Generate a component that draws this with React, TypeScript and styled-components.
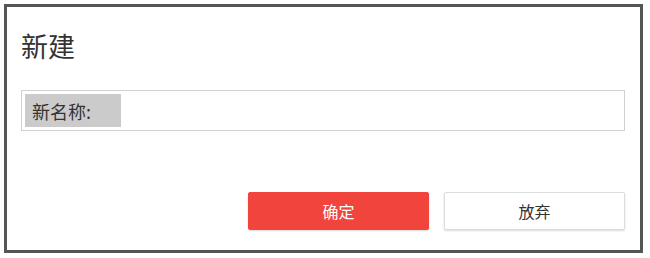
import styled, { createGlobalStyle } from 'styled-components';

const GlobalStyle = createGlobalStyle`
  html, body {
    margin: 0;
    padding: 0;
    background: #ffffff;
  }
  body {
    font-family: "Noto Sans CJK SC", "Noto Sans", sans-serif;
  }
`;

const App = () => {
  return (
    <>
      <GlobalStyle />
      <Dialog>
        <Title>新建</Title>
        <Field>
          <FieldLabel>新名称:</FieldLabel>
          <FieldInput type="text" />
        </Field>
        <Actions>
          <Button primary>确定</Button>
          <Button>放弃</Button>
        </Actions>
      </Dialog>
    </>
  );
};

export default App;

const Dialog = styled.div`
  box-sizing: border-box;
  margin: 4px 0 0 4px;
  width: 639px;
  height: 249px;
  border: 3px solid #555555;
  background: #ffffff;
  display: flex;
  flex-direction: column;
  padding: 25px 15px 20px 14px;
`;

const Title = styled.h1`
  margin: 0;
  font-size: 27px;
  line-height: 27px;
  font-weight: normal;
  color: #333333;
`;

const Field = styled.div`
  box-sizing: border-box;
  margin-top: 31px;
  height: 41px;
  border: 1px solid #d0d0d0;
  padding: 3px;
  display: flex;
  align-items: stretch;
`;

const FieldLabel = styled.label`
  box-sizing: border-box;
  width: 96px;
  padding-left: 7px;
  background: #cbcbcb;
  color: #333333;
  font-size: 18px;
  display: flex;
  align-items: center;
`;

const FieldInput = styled.input`
  flex: 1;
  border: none;
  outline: none;
  background: transparent;
  font-size: 16px;
`;

const Actions = styled.div`
  margin-top: auto;
  display: flex;
  justify-content: flex-end;
  gap: 15px;
`;

const Button = styled.button<{ primary?: boolean }>`
  box-sizing: border-box;
  width: 181px;
  height: 38px;
  border-radius: 2px;
  font-family: "Noto Sans CJK SC", "Noto Sans", sans-serif;
  font-size: 16px;
  cursor: pointer;
  color: ${p => (p.primary ? '#ffffff' : '#333333')};
  background: ${p => (p.primary ? '#f0443d' : '#ffffff')};
  border: 1px solid ${p => (p.primary ? '#f0443d' : '#dddddd')};
  box-shadow: 0 1px 2px rgba(0, 0, 0, 0.15);
`;
